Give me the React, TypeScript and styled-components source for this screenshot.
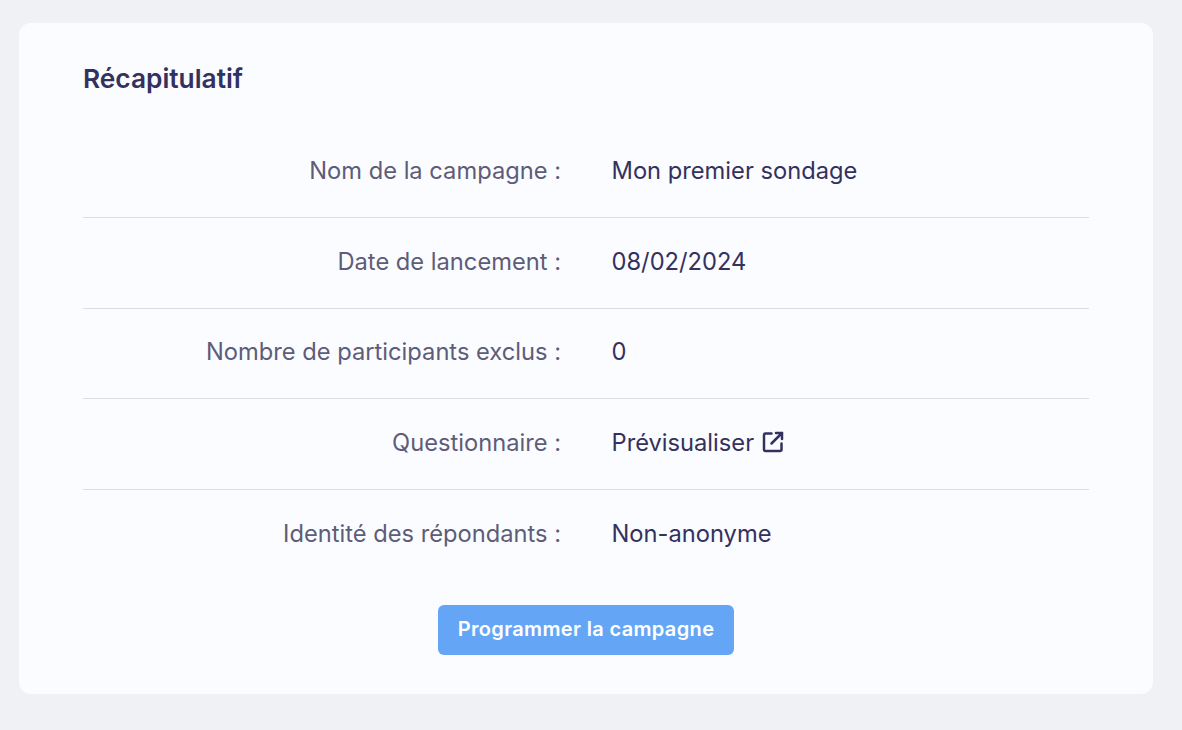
import React from 'react';
import styled, { createGlobalStyle } from 'styled-components';

const Global = createGlobalStyle`
  html, body { margin: 0; padding: 0; background: #f0f1f5; }
  body { font-family: Inter, Lato, "Liberation Sans", sans-serif; width: 1182px; height: 730px; overflow: hidden; }
`;

const Page = styled.div`
  padding: 23px 29px 36px 19px;
`;

const Card = styled.section`
  height: 671px;
  box-sizing: border-box;
  background: #fbfcff;
  border-radius: 12px;
  padding: 40px 64px 39px;
  display: flex;
  flex-direction: column;
`;

const Title = styled.h2`
  margin: 0 0 32.4px;
  font-size: 26.3px;
  line-height: 32px;
  font-weight: 600;
  color: #34315e;
`;

const Row = styled.div`
  display: grid;
  grid-template-columns: 478px 1fr;
  column-gap: 50.5px;
  align-items: center;
  height: 90.6px;
  padding-bottom: 3px;
  box-sizing: border-box;
  border-bottom: 1px solid #dcdce1;
  font-size: 23.7px;

  &:last-of-type {
    border-bottom: none;
  }
`;

const Label = styled.span`
  text-align: right;
  color: #5e5c78;
`;

const Value = styled.span`
  color: #34315e;
  display: flex;
  align-items: center;
  gap: 8px;
`;

const Actions = styled.footer`
  margin-top: auto;
  display: flex;
  justify-content: center;
`;

const Button = styled.button`
  width: 296px;
  height: 50px;
  border: none;
  border-radius: 6px;
  background: #64a6f5;
  color: #fff;
  font-family: inherit;
  font-size: 20px;
  letter-spacing: 0.35px;
  font-weight: 600;
  padding: 0 0 2px;
`;

const rows = [
  ['Nom de la campagne :', 'Mon premier sondage'],
  ['Date de lancement :', '08/02/2024'],
  ['Nombre de participants exclus :', '0'],
  ['Questionnaire :', 'Prévisualiser'],
  ['Identité des répondants :', 'Non-anonyme'],
];

const ExternalIcon = () => (
  <svg width="22" height="22" viewBox="0 0 22 22" fill="none" stroke="#34315e" strokeWidth="2.5" strokeLinecap="round" strokeLinejoin="round">
    <path d="M9.5 2.5H3.5A1.5 1.5 0 0 0 2 4v14.5A1.5 1.5 0 0 0 3.5 20H18a1.5 1.5 0 0 0 1.5-1.5V12.5" />
    <path d="M14 2h6v6" />
    <path d="M20 2L9.5 12.5" />
  </svg>
);

export default function App() {
  return (
    <Page>
      <Global />
      <Card>
        <Title>Récapitulatif</Title>
        {rows.map(([label, value]) => (
          <Row key={label}>
            <Label>{label}</Label>
            <Value>
              {value}
              {label === 'Questionnaire :' && <ExternalIcon />}
            </Value>
          </Row>
        ))}
        <Actions>
          <Button>Programmer la campagne</Button>
        </Actions>
      </Card>
    </Page>
  );
}
